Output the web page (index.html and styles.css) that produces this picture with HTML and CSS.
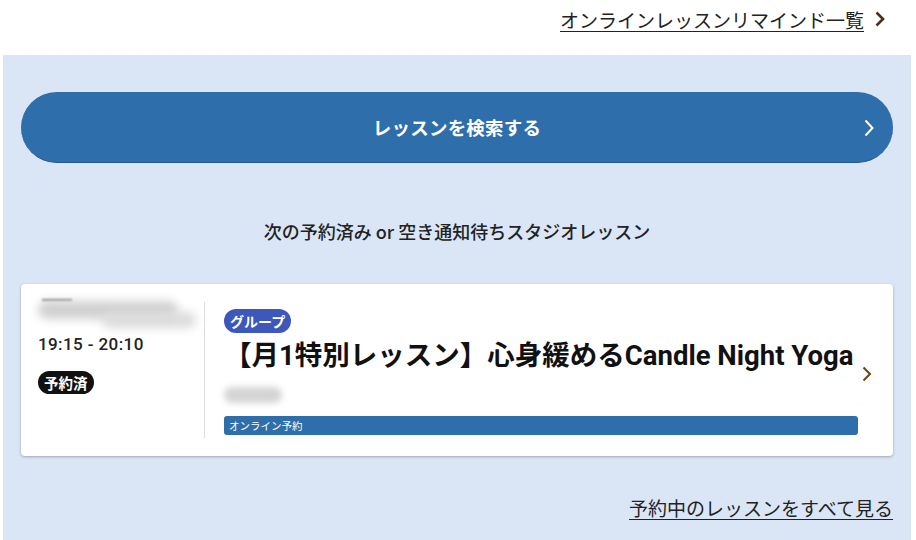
FILE: index.html
```html
<!DOCTYPE html>
<html lang="ja">
<head>
<meta charset="utf-8">
<link rel="stylesheet" href="styles.css">
</head>
<body>
<header class="topbar">
  <a class="top-link" href="#">オンラインレッスンリマインド一覧</a>
  <svg class="top-chev" width="12" height="16" viewBox="0 0 12 16"><path d="M2.5 1.5 L9 8 L2.5 14.5" fill="none" stroke="#4a3018" stroke-width="2.6"/></svg>
</header>
<main class="panel">
  <a class="search-btn" href="#">
    <span class="search-label">レッスンを検索する</span>
    <svg class="search-chev" width="12" height="18" viewBox="0 0 12 18"><path d="M2.5 1.5 L9.5 9 L2.5 16.5" fill="none" stroke="#ffffff" stroke-width="2"/></svg>
  </a>
  <h2 class="section-title">次の予約済み or 空き通知待ちスタジオレッスン</h2>
  <article class="card">
    <div class="card-left">
      <div class="blur-date">
        <span class="dash"></span>
        <span class="blob blob-a"></span>
        <span class="blob blob-b"></span>
      </div>
      <div class="time">19:15 - 20:10</div>
      <span class="status">予約済</span>
    </div>
    <div class="card-main">
      <span class="type-badge">グループ</span>
      <h3 class="lesson-title">【月1特別レッスン】心身緩めるCandle Night Yoga</h3>
      <div class="blur-instructor"></div>
      <div class="online-bar">オンライン予約</div>
    </div>
    <div class="card-chev">
      <svg width="10" height="16" viewBox="0 0 10 16"><path d="M1.5 1.5 L8 8 L1.5 14.5" fill="none" stroke="#6a4216" stroke-width="2"/></svg>
    </div>
  </article>
  <div class="more-row">
    <a class="more-link" href="#">予約中のレッスンをすべて見る</a>
  </div>
</main>
</body>
</html>
```

FILE: styles.css
```css
html, body {
  margin: 0;
  padding: 0;
  background: #ffffff;
}
body {
  font-family: "Noto Sans CJK JP", sans-serif;
  color: #222222;
  width: 916px;
  height: 540px;
  overflow: hidden;
}
.topbar {
  height: 55px;
  display: flex;
  align-items: center;
  justify-content: flex-end;
  padding-right: 30px;
  gap: 10px;
  box-sizing: border-box;
  padding-bottom: 15px;
}
.top-link {
  font-size: 19px;
  color: #222222;
  text-decoration: underline;
  text-underline-offset: 3px;
  text-decoration-thickness: 1px;
  line-height: 26px;
}
.top-chev {
  display: block;
  margin-top: -2px;
}
.panel {
  margin: 0 5px 0 3px;
  background: #dae6f6;
  padding: 37px 18px 40px;
  min-height: 485px;
  box-sizing: border-box;
}
.search-btn {
  height: 71px;
  border-radius: 36px;
  background: #2e6eab;
  border-bottom: 1px solid #1f5a93;
  box-sizing: border-box;
  display: flex;
  align-items: center;
  justify-content: center;
  position: relative;
  text-decoration: none;
}
.search-label {
  color: #ffffff;
  font-weight: 700;
  font-size: 18.5px;
  letter-spacing: 0.2px;
}
.search-chev {
  position: absolute;
  right: 18px;
  top: 27px;
}
.section-title {
  margin: 55px 0 0;
  text-align: center;
  font-size: 18px;
  font-weight: 500;
  line-height: 26px;
  color: #222222;
}
.card {
  margin-top: 40px;
  height: 172px;
  background: #ffffff;
  border-radius: 4px;
  box-shadow: 0 1px 3px rgba(0,0,0,0.28);
  display: flex;
  padding: 18px 0;
  box-sizing: border-box;
}
.card-left {
  width: 184px;
  border-right: 1px solid #dddddd;
  box-sizing: border-box;
  padding-left: 17px;
  display: flex;
  flex-direction: column;
  align-items: flex-start;
}
.blur-date {
  position: relative;
  width: 160px;
  height: 32px;
  margin-top: -5px;
}
.dash {
  position: absolute;
  left: 4px;
  top: 2px;
  width: 30px;
  height: 1.5px;
  background: #777777;
  filter: blur(0.8px);
}
.blob {
  position: absolute;
  border-radius: 9px;
  filter: blur(5px);
}
.blob-a {
  left: 0;
  top: 4px;
  width: 140px;
  height: 18px;
  background: #d0d0d0;
}
.blob-b {
  left: 64px;
  top: 15px;
  width: 94px;
  height: 16px;
  background: #dcdcdc;
}
.time {
  font-family: Roboto, "Noto Sans CJK JP", sans-serif;
  font-size: 17px;
  font-weight: 500;
  letter-spacing: 0.4px;
  color: #222222;
  margin-top: 3px;
  line-height: 24px;
}
.status {
  margin-top: 15px;
  background: #111111;
  color: #ffffff;
  font-size: 14.5px;
  font-weight: 700;
  line-height: 23px;
  height: 23px;
  padding: 0 6px;
  border-radius: 12px;
}
.card-main {
  flex: 1;
  padding: 7px 0 3px 19px;
  display: flex;
  flex-direction: column;
  align-items: flex-start;
}
.type-badge {
  background: #3d57ba;
  color: #ffffff;
  font-size: 14px;
  font-weight: 700;
  line-height: 24px;
  height: 24px;
  padding: 0 6px;
  border-radius: 12px;
}
.lesson-title {
  margin: 6px 0 0;
  font-family: Roboto, "Noto Sans CJK JP", sans-serif;
  font-size: 27.5px;
  font-weight: 700;
  line-height: 34px;
  color: #111111;
  white-space: nowrap;
}
.blur-instructor {
  margin-top: 14px;
  width: 58px;
  height: 16px;
  background: #d4d4d4;
  border-radius: 8px;
  filter: blur(3px);
}
.online-bar {
  margin-top: auto;
  align-self: stretch;
  height: 19px;
  background: #2e6eab;
  border-radius: 3px;
  color: #ffffff;
  font-size: 10.5px;
  line-height: 19px;
  padding-left: 5px;
}
.card-chev {
  width: 35px;
  display: flex;
  align-items: center;
  justify-content: center;
  padding-right: 17px;
  box-sizing: border-box;
  padding-top: 8px;
}
.card-chev svg {
  display: block;
}
.more-row {
  margin-top: 39px;
  display: flex;
  justify-content: flex-end;
}
.more-link {
  font-size: 19px;
  color: #222222;
  text-decoration: underline;
  text-underline-offset: 3px;
  text-decoration-thickness: 1px;
  line-height: 26px;
}
```
